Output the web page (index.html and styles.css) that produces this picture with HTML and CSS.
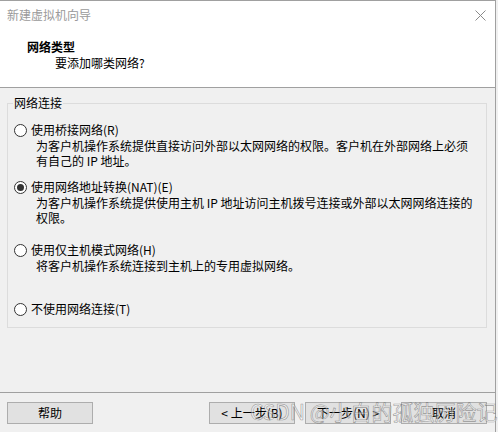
FILE: index.html
```html
<!DOCTYPE html>
<html lang="zh-CN">
<head>
<meta charset="utf-8">
<title>新建虚拟机向导</title>
<link rel="stylesheet" href="styles.css">
</head>
<body>
<div class="window">
  <div class="header">
    <div class="titlebar">
      <span class="title">新建虚拟机向导</span>
      <svg class="close" width="11" height="11" viewBox="0 0 11 11"><path d="M0.5 0.5 L10.5 10.5 M10.5 0.5 L0.5 10.5" stroke="#8a8a8a" stroke-width="1" fill="none"/></svg>
    </div>
    <div class="heading">网络类型</div>
    <div class="subheading">要添加哪类网络?</div>
  </div>
  <div class="content">
    <fieldset class="group">
      <legend>网络连接</legend>
      <div class="option opt1">
        <div class="label"><span class="radio"></span>使用桥接网络(R)</div>
        <div class="desc">为客户机操作系统提供直接访问外部以太网网络的权限。客户机在外部网络上必须<br>有自己的 IP 地址。</div>
      </div>
      <div class="option opt2">
        <div class="label"><span class="radio checked"></span>使用网络地址转换(NAT)(E)</div>
        <div class="desc">为客户机操作系统提供使用主机 IP 地址访问主机拨号连接或外部以太网网络连接的<br>权限。</div>
      </div>
      <div class="option opt3">
        <div class="label"><span class="radio"></span>使用仅主机模式网络(H)</div>
        <div class="desc">将客户机操作系统连接到主机上的专用虚拟网络。</div>
      </div>
      <div class="option opt4">
        <div class="label"><span class="radio"></span>不使用网络连接(T)</div>
      </div>
    </fieldset>
    <div class="spacer"></div>
    <div class="separator"></div>
    <div class="buttons">
      <button class="btn">帮助</button>
      <div class="right">
        <button class="btn">&lt; 上一步(B)</button>
        <button class="btn">下一步(N) &gt;</button>
        <button class="btn">取消</button>
      </div>
    </div>
  </div>
  <div class="watermark" aria-hidden="true">CSDN @小白的孤独历险记</div>
</div>
</body>
</html>
```
FILE: styles.css
```css
* { box-sizing: border-box; }
html, body { margin: 0; padding: 0; }
body {
  background: #f0f0f0;
  font-family: "Noto Sans CJK SC", "Microsoft YaHei", "Noto Sans", sans-serif;
  font-size: 12px;
  color: #000;
  width: 498px;
  height: 432px;
  overflow: hidden;
}
.window {
  position: relative;
  width: 496px;
  height: 432px;
  border-top: 1px solid #a0a0a0;
  border-right: 1px solid #a0a0a0;
  display: flex;
  flex-direction: column;
  background: #f0f0f0;
}
.header {
  background: #fff;
  height: 87px;
  border-bottom: 1px solid #a0a0a0;
  flex: none;
}
.titlebar {
  display: flex;
  align-items: center;
  justify-content: space-between;
  height: 28px;
  padding: 0 9px 0 7px;
}
.title {
  color: #9a9a9a;
  line-height: 16px;
}
.close { display: block; }
.heading {
  font-weight: bold;
  padding-left: 27px;
  margin-top: 10px;
  line-height: 16px;
}
.subheading {
  padding-left: 55px;
  line-height: 16px;
}
.content {
  flex: 1;
  display: flex;
  flex-direction: column;
}
.group {
  margin: 7px 0 0 7px;
  width: 480px;
  height: 233px;
  border: 1px solid #dcdcdc;
  padding: 11px 0 0 6px;
  flex: none;
}
.group legend {
  padding: 0 1px;
  margin-left: -1px;
  line-height: 16px;
}
.option .label {
  display: flex;
  align-items: center;
  line-height: 16px;
  height: 16px;
}
.radio {
  width: 13px;
  height: 13px;
  border: 1px solid #333;
  border-radius: 50%;
  background: #fff;
  margin-right: 4px;
  display: inline-flex;
  align-items: center;
  justify-content: center;
  flex: none;
}
.radio.checked::after {
  content: "";
  width: 7px;
  height: 7px;
  border-radius: 50%;
  background: #333;
}
.desc {
  padding-left: 22px;
  line-height: 15px;
}
.opt2 { margin-top: 11px; }
.opt3 { margin-top: 17px; }
.opt4 { margin-top: 28px; }
.spacer { flex: 1; }
.separator {
  height: 1px;
  background: #a0a0a0;
  flex: none;
}
.buttons {
  display: flex;
  justify-content: space-between;
  padding: 9px 8px 8px 7px;
  flex: none;
}
.right {
  display: flex;
  gap: 10px;
}
.btn {
  width: 86px;
  height: 22px;
  background: #e1e1e1;
  border: 1px solid #adadad;
  font: inherit;
  font-size: 12px;
  line-height: 18px;
  padding: 0;
  color: #000;
}
.watermark {
  position: absolute;
  left: 250px;
  top: 397px;
  font-size: 21px;
  line-height: 26px;
  color: rgba(255, 255, 255, 0.4);
  -webkit-text-stroke: 0.6px rgba(80, 80, 80, 0.55);
  white-space: nowrap;
  pointer-events: none;
}
```
